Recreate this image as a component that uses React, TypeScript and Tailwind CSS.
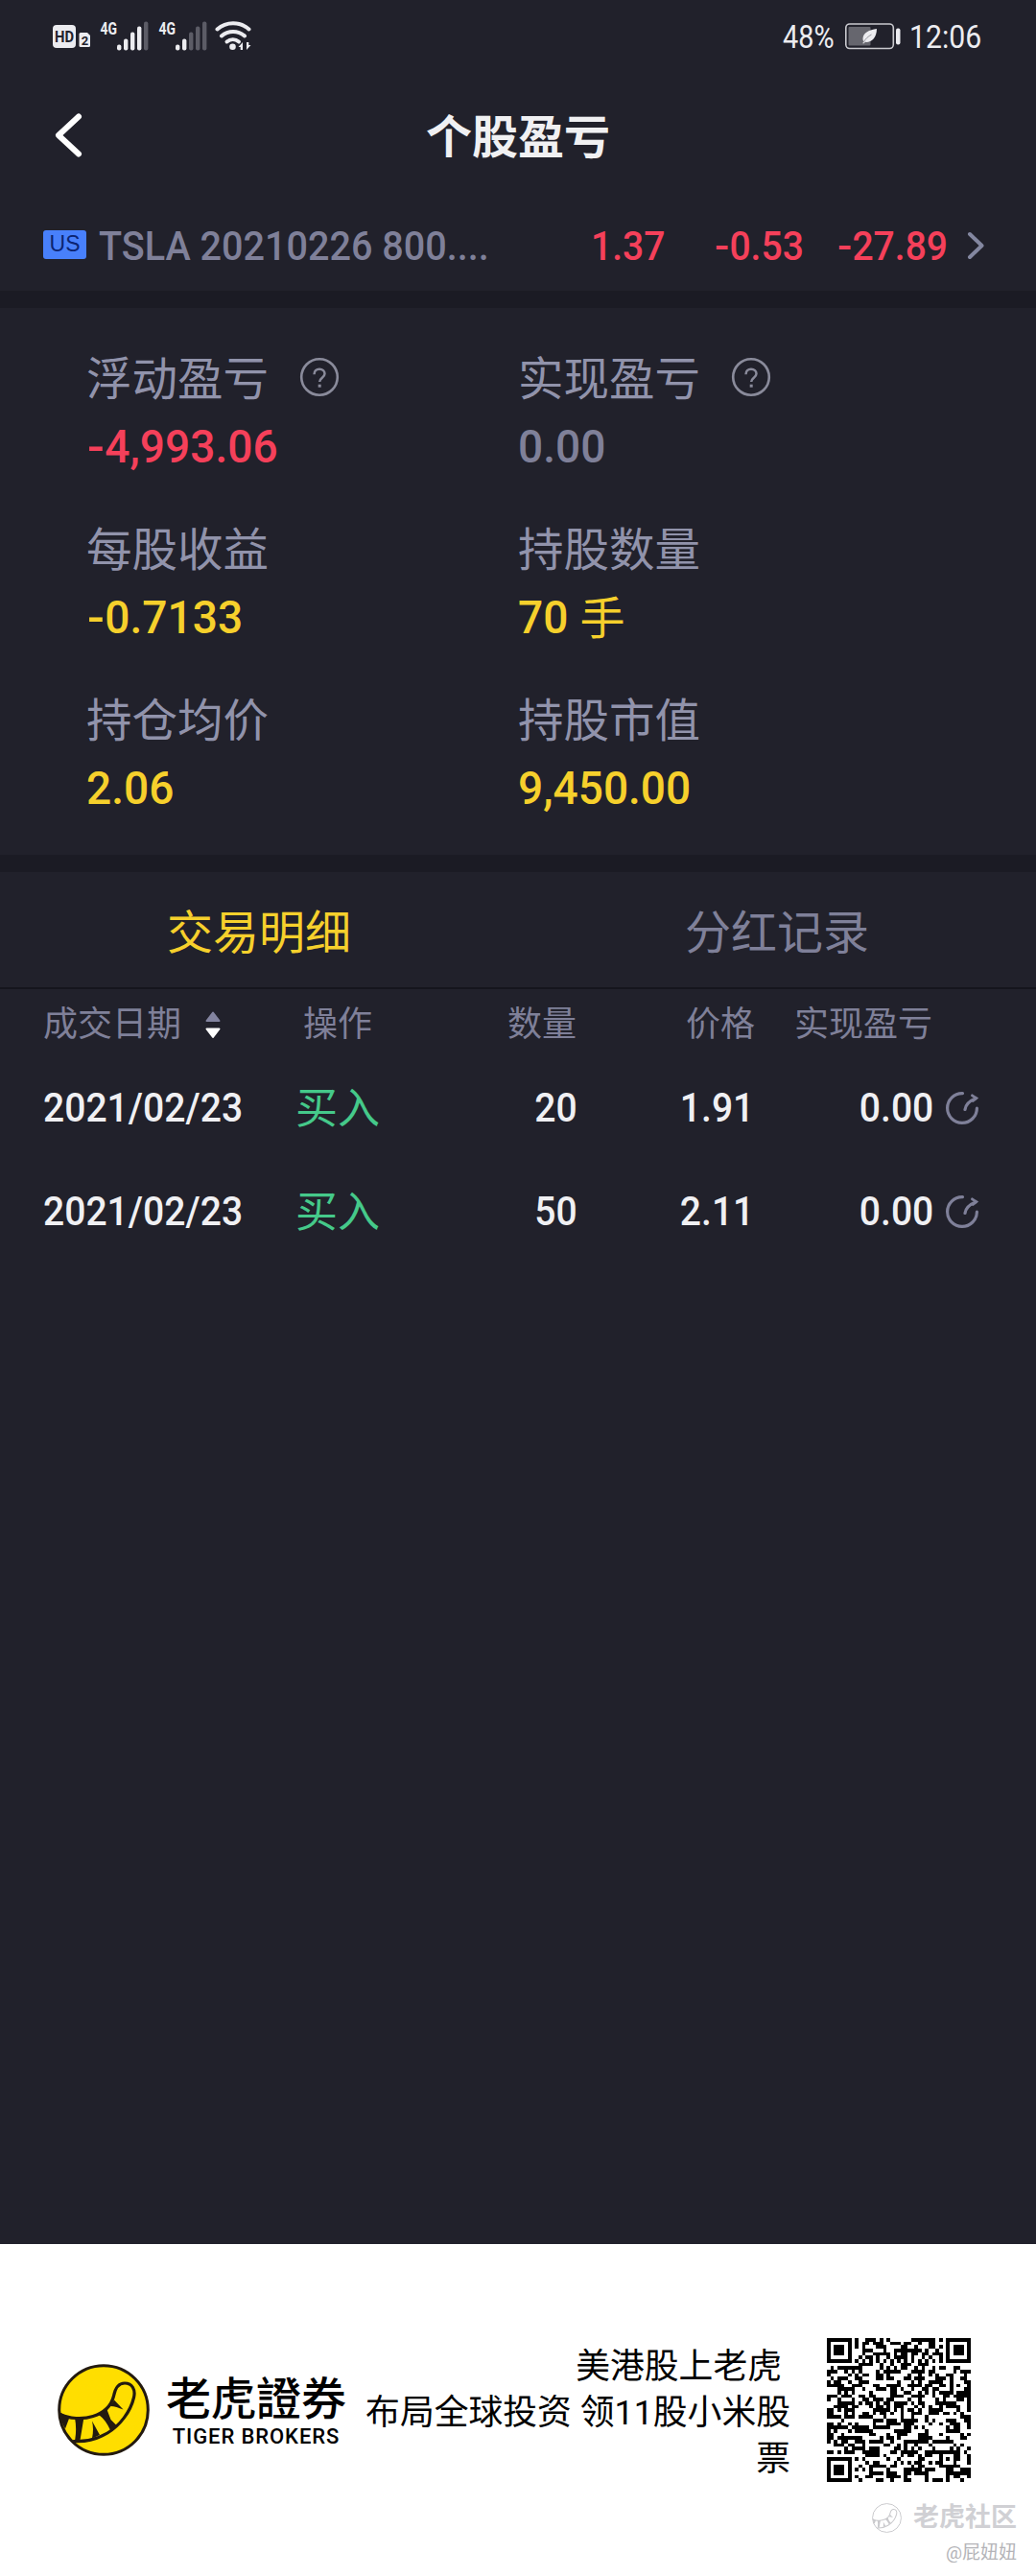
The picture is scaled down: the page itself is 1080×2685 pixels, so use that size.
import type { ReactNode } from "react";

const trades = [
  { date: "2021/02/23", side: "买入", qty: "20", price: "1.91", pnl: "0.00" },
  { date: "2021/02/23", side: "买入", qty: "50", price: "2.11", pnl: "0.00" },
];

const stats = [
  { label: "浮动盈亏", value: "-4,993.06", tone: "text-[#f5405a]", help: true },
  { label: "实现盈亏", value: "0.00", tone: "text-[#7f8099]", help: true },
  { label: "每股收益", value: "-0.7133", tone: "text-[#f6d02c]" },
  { label: "持股数量", value: "70", unit: "手", tone: "text-[#f6d02c]" },
  { label: "持仓均价", value: "2.06", tone: "text-[#f6d02c]" },
  { label: "持股市值", value: "9,450.00", tone: "text-[#f6d02c]" },
];

/* Figures: minus signs get extra room on both sides. */
function Num({ children }: { children: string }) {
  const neg = children.startsWith("-");
  return (
    <>
      {neg && <span className="mr-[0.05em] ml-[0.02em] inline-block w-[0.35em] origin-left scale-x-[1.15]">-</span>}
      {neg ? children.slice(1) : children}
    </>
  );
}

function SignalBars({ x, on }: { x: number; on: number }) {
  const heights = [6, 12, 19, 25, 30];
  return (
    <g>
      {heights.map((h, i) => (
        <rect key={i} x={x + i * 7} y={52.5 - h} width="4.4" height={h} rx="2" fill={i < on ? "#ececf0" : "#5c5c66"} />
      ))}
    </g>
  );
}

function StatusIcons() {
  return (
    <svg className="ml-[52px] h-[76px] w-[216px]" viewBox="52 0 216 76" fontFamily="Roboto" fill="#ececf0">
      <rect x="55" y="26" width="24" height="24" rx="4" />
      <text x="67" y="43.5" fontSize="16" fontWeight="700" textAnchor="middle" textLength="20" lengthAdjust="spacingAndGlyphs" fill="#22222c">HD</text>
      <path d="M84 34h7l3 3v10.5a1.5 1.5 0 0 1-1.5 1.5h-8.500a1.500 1.500 0 0 1-1.500-1.500V35.500a1.500 1.500 0 0 1 1.500-1.500z" />
      <text x="88.500" y="46.500" fontSize="13" fontWeight="700" textAnchor="middle" fill="#22222c">2</text>
      <text x="104.500" y="35.500" fontSize="19" fontWeight="700" textLength="17.500" lengthAdjust="spacingAndGlyphs">4G</text>
      <SignalBars x={122} on={4} />
      <text x="165.500" y="35.500" fontSize="19" fontWeight="700" textLength="17.500" lengthAdjust="spacingAndGlyphs">4G</text>
      <SignalBars x={183} on={2} />
      <g fill="none" stroke="#ececf0" strokeWidth="4" strokeLinecap="round">
        <path d="M226.500 30.500a25 25 0 0 1 33 0" />
        <path d="M231 37.500a18 18 0 0 1 24 0" />
        <path d="M236.500 43.500a10 10 0 0 1 12.500 0" />
      </g>
      <circle cx="242.500" cy="48.800" r="3.300" />
      <path d="M248.500 49l4.500-5v8h-2.300v-3zM261.500 47l-4.500 5v-8h2.300v3z" />
    </svg>
  );
}

function BatteryIcon() {
  return (
    <svg className="h-[30px] w-[60px]" viewBox="0 0 60 30">
      <rect x="1.800" y="2" width="49.500" height="25.500" rx="4" fill="none" stroke="#c9c9ce" strokeWidth="1.600" />
      <rect x="4.500" y="5" width="23" height="19.500" rx="1" fill="#66666e" />
      <rect x="54" y="6.500" width="4.500" height="17" rx="2" fill="#ececf0" />
      <path d="M34 7c-8 1-14 4-14.500 10 0 1.500.3 2.500.8 3.200l-1 2h1.500l1-1.400c6 .8 12.200-3.800 12.200-13.800z" fill="#ececf0" />
      <path d="M20 21.500c2-4 5-6.500 8.500-8.500" fill="none" stroke="#8d8d95" strokeWidth="0.900" />
    </svg>
  );
}

function HelpIcon() {
  return (
    <svg className="h-[42px] w-[42px]" viewBox="0 0 42 42" fill="none">
      <circle cx="21" cy="21" r="18.800" stroke="#8a8b9b" strokeWidth="2.600" />
      <path d="M15.500 18.200c0-3.300 2.200-5.500 5.500-5.500s5.500 2 5.500 4.900c0 4.200-5.300 4.100-5.300 8.400" stroke="#8a8b9b" strokeWidth="2.500" />
      <rect x="19.700" y="28.700" width="3" height="3" fill="#8a8b9b" />
    </svg>
  );
}

function DetailIcon() {
  return (
    <svg className="h-[38px] w-[38px]" viewBox="0 0 38 38" fill="none" stroke="#7f8099" strokeWidth="3.200" strokeLinecap="round">
      <path d="M19.500 3.600h-.5a15.400 15.400 0 1 0 15.400 15.600" />
      <path d="M22 20.500c.6-4.600 3.800-8.600 11-11.500" />
      <path d="M29.500 5.800l4.300 2.900-3.500 2.700" strokeWidth="2.800" />
    </svg>
  );
}

function TigerTail({ className, line, fill }: { className: string; line: string; fill: string }) {
  return (
    <svg className={className} viewBox="0 0 96 96">
      <circle cx="48" cy="48" r="46.300" fill={fill} stroke={line} strokeWidth="3" />
      <path
        d="M2.500 52.500C12 57 26 58 37 54.500c11-3.500 19-11 21.500-21 1.500-8 5-13.500 11.500-13.500 8 0 11.500 7 9.500 15C76 50 65 64 52 72 41 78.500 28 81.500 16 80.500"
        fill="none"
        stroke={line}
        strokeWidth="3.200"
      />
      <path d="M2.500 50.500l10 5-4.500 12c-3.500-5-5-11-5.500-17z" fill={line} />
      <path d="M18 56l9.500-.5-4 24-5.500.5c1.500-8 1.500-16 0-24z" fill={line} />
      <path d="M36 59.500l8 14.500-8 3.500c1.500-7 1.200-12 0-18z" fill={line} />
      <path d="M43 53l8.500-5.500 4 10.500 6 6-6.500 5c-3-6.500-6.500-12-12-16z" fill={line} />
      <path d="M55 44l4-6.500 9.500 10c-5-2-9-3.300-13.500-3.500z" fill={line} />
    </svg>
  );
}

const QR_SIZE = 41;

/* Module grid: three finders, one alignment mark, timing lines, and filler data. */
function qrPath() {
  let seed = 20210226;
  const rand = () => {
    seed = (seed * 1664525 + 1013904223) >>> 0;
    return seed / 4294967296;
  };
  const ring = (dx: number, dy: number) => Math.max(Math.abs(dx), Math.abs(dy));
  let d = "";
  for (let y = 0; y < QR_SIZE; y++) {
    for (let x = 0; x < QR_SIZE; x++) {
      let on = rand() < 0.5;
      if (y === 6 || x === 6) on = (x + y) % 2 === 0;
      const a = ring(x - 34, y - 34);
      if (a <= 2) on = a !== 1;
      for (const [cx, cy] of [[3, 3], [37, 3], [3, 37]]) {
        const r = ring(x - cx, y - cy);
        if (r <= 4) on = r === 3 || r <= 1;
      }
      if (on) d += `M${x} ${y}h1v1h-1z`;
    }
  }
  return d;
}

function QrCode() {
  return (
    <svg className="h-[150px] w-[150px]" viewBox="0 0 41 41" shapeRendering="crispEdges">
      <path d={qrPath()} fill="#000" />
    </svg>
  );
}

function Tab({ active, children }: { active?: boolean; children: ReactNode }) {
  return (
    <div
      className={
        active
          ? "flex flex-1 items-center justify-center text-[#f6d02c]"
          : "flex flex-1 items-center justify-center text-[#7f8099]"
      }
    >
      {children}
    </div>
  );
}

export default function App() {
  return (
    <div className="flex h-[2685px] w-[1080px] flex-col overflow-hidden bg-[#21212b] font-['Roboto','Noto_Sans_CJK_SC',sans-serif] leading-none">
      <div className="flex h-[76px] items-center justify-between">
        <StatusIcons />
        <div className="mr-[56px] flex items-center text-[34px] text-[#ececf0]">
          <span className="w-[56px]">
            <span className="inline-block origin-left scale-x-[0.85]">48%</span>
          </span>
          <span className="ml-[8px]">
            <BatteryIcon />
          </span>
          <span className="ml-[8px] w-[76px]">
            <span className="inline-block origin-left scale-x-[0.89]">12:06</span>
          </span>
        </div>
      </div>

      <div className="grid h-[130px] grid-cols-[1fr_auto_1fr] items-center">
        <svg className="ml-[55px] h-[50px] w-[34px]" viewBox="0 0 34 50" fill="none" stroke="#fff" strokeWidth="6" strokeLinecap="round" strokeLinejoin="round">
          <path d="M27 5.500L6 25l21 19.500" />
        </svg>
        <h1 className="pt-[5px] text-[48px] font-bold text-[#f0f0f2]">个股盈亏</h1>
        <span />
      </div>

      <div className="flex h-[97px] items-center pt-[3px] pl-[45px] text-[42px]">
        <span className="-mt-[3px] flex h-[30px] w-[45px] items-center justify-center rounded-[3px] bg-[#4880fb] font-['Liberation_Sans',sans-serif] text-[23px] text-[#0c2472]">
          US
        </span>
        <span className="ml-[13px] w-[513px] pt-[2px] font-medium whitespace-nowrap text-[#7f8099]">
          <span className="inline-block origin-left scale-x-[0.942]">TSLA 20210226 800....</span>
        </span>
        <div className="flex pt-[2px] font-medium text-[#f5405a]">
          <span className="w-[128px]">
            <span className="inline-block origin-left scale-x-[0.93]">1.37</span>
          </span>
          <span className="w-[128px]">
            <span className="inline-block origin-left scale-x-[0.93]"><Num>-0.53</Num></span>
          </span>
          <span className="w-[135px]">
            <span className="inline-block origin-left scale-x-[0.93]"><Num>-27.89</Num></span>
          </span>
        </div>
        <svg className="h-[34px] w-[22px]" viewBox="0 0 22 34" fill="none" stroke="#8387a0" strokeWidth="4" strokeLinecap="round" strokeLinejoin="round">
          <path d="M4 5l12.500 12L4 29" />
        </svg>
      </div>

      <div className="h-[18px] bg-[#1b1b24]" />

      <div className="grid h-[570px] grid-cols-[450px_1fr] content-start gap-y-[48px] pt-[46px] pl-[90px]">
        {stats.map((s) => (
          <div key={s.label} className="flex h-[130px] flex-col gap-[9px]">
            <div className="flex h-[60px] items-center text-[47.500px] text-[#9193ab]">
              <span>{s.label}</span>
              {s.help && (
                <span className="-mt-[9px] ml-[32px]">
                  <HelpIcon />
                </span>
              )}
            </div>
            <div className={s.tone + " flex h-[60px] items-center text-[48px] font-medium"}>
              <span className="inline-block origin-left scale-x-[0.96]"><Num>{s.value}</Num></span>
              {s.unit && <span className="ml-[10px] text-[47px] font-normal">{s.unit}</span>}
            </div>
          </div>
        ))}
      </div>

      <div className="h-[18px] bg-[#1b1b24]" />

      <div className="flex h-[122px] border-b-2 border-[#15151d] pt-[8px] text-[48px]">
        <Tab active>交易明细</Tab>
        <Tab>分红记录</Tab>
      </div>

      <div className="flex h-[69px] items-center pt-[5px] pl-[45px] text-[36px] text-[#7f8099]">
        <div className="flex w-[265px] items-center">
          <span>成交日期</span>
          <svg className="ml-[24px] h-[30px] w-[18px]" viewBox="0 0 18 30">
            <path d="M9 2.500l6.500 8.500h-13z" fill="#8384a0" stroke="#8384a0" strokeWidth="2" strokeLinejoin="round" />
            <path d="M9 28l6.500-8.500h-13z" fill="#fff" stroke="#fff" strokeWidth="2" strokeLinejoin="round" />
          </svg>
        </div>
        <span className="w-[84px] text-center">操作</span>
        <span className="w-[207px] text-right">数量</span>
        <span className="w-[186px] text-right">价格</span>
        <span className="w-[185px] text-right">实现盈亏</span>
      </div>

      {trades.map((t, i) => (
        <div key={i} className="flex h-[108px] items-center pt-[2px] pl-[45px] text-[42px] font-medium text-[#f0f0f3]">
          <span className="w-[263px]">
            <span className="inline-block origin-left scale-x-[0.93]">{t.date}</span>
          </span>
          <span className="w-[90px] pt-[2px] text-[44px] font-normal text-[#45c98a]">{t.side}</span>
          <span className="w-[204px] text-right">
            <span className="inline-block origin-right scale-x-[0.93]">{t.qty}</span>
          </span>
          <span className="w-[184px] text-right">
            <span className="inline-block origin-right scale-x-[0.93]">{t.price}</span>
          </span>
          <span className="w-[187px] text-right">
            <span className="inline-block origin-right scale-x-[0.93]">{t.pnl}</span>
          </span>
          <span className="-mt-[1px] ml-[11px]">
            <DetailIcon />
          </span>
        </div>
      ))}

      <div className="relative mt-auto flex h-[346px] bg-white text-black">
        <TigerTail className="mt-[125px] ml-[60px] h-[96px] w-[96px]" fill="#ffde00" line="#231a10" />
        <div className="mt-[138px] ml-[16px] flex w-[190px] flex-col items-center">
          <span className="h-[48px] text-[47px] leading-[48px] font-medium whitespace-nowrap font-['Roboto','Noto_Sans_CJK_TC',sans-serif]">老虎證券</span>
          <span className="mt-[3px] text-[22px] leading-[24px] font-medium tracking-[0.900px] whitespace-nowrap">TIGER BROKERS</span>
        </div>
        <p className="mt-[104px] ml-[14px] w-[448px] text-right text-[35.800px] leading-[48px]">
          <span className="mr-[9px]">美港股上老虎</span>
          <br />
          布局全球投资 领11股小米股
          <br />票
        </p>
        <div className="mt-[98px] ml-[38px]">
          <QrCode />
        </div>
        <div className="absolute right-[20px] bottom-[15px] flex flex-col items-end">
          <div className="flex items-center">
            <TigerTail className="h-[31px] w-[31px]" fill="#fff" line="#c9c9cc" />
            <span className="ml-[12px] text-[27px] font-bold text-[#d0d0d4]">老虎社区</span>
          </div>
          <span className="mt-[11px] text-[19px] text-[#b4b4b8]">@屁妞妞</span>
        </div>
      </div>
    </div>
  );
}
